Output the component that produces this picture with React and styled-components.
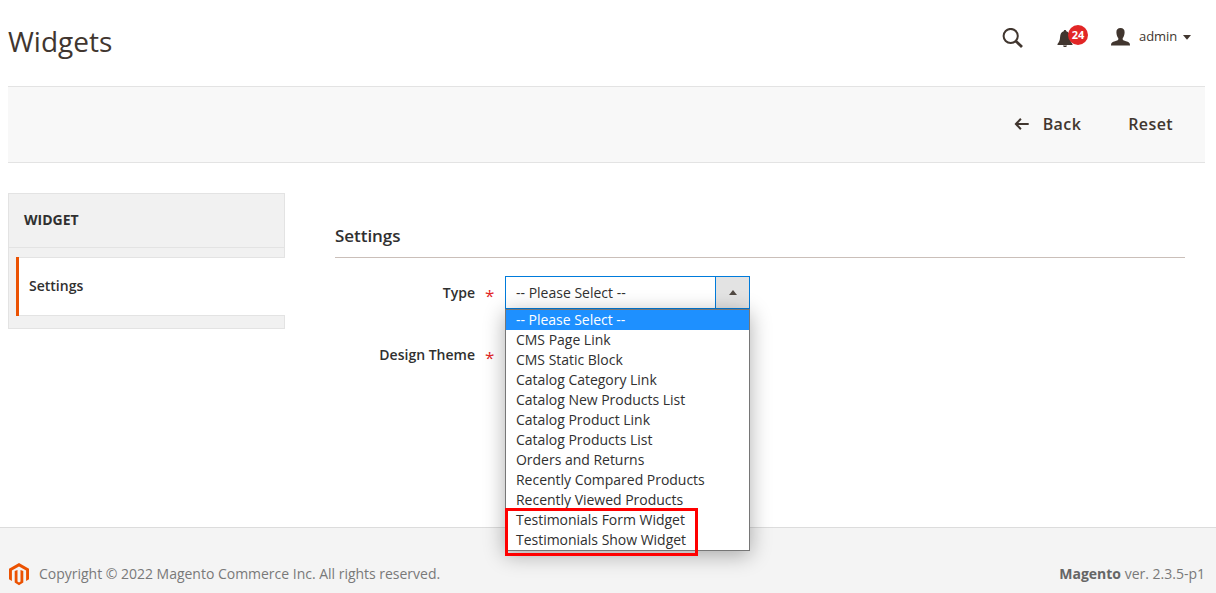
import React from 'react';
import styled, { createGlobalStyle } from 'styled-components';

const GlobalStyle = createGlobalStyle`
  * { box-sizing: border-box; }
  body {
    margin: 0;
    background: #fff;
    color: #303030;
    font: 400 14px/20px 'Open Sans', 'Noto Sans', sans-serif;
    overflow: hidden;
  }
`;

const Page = styled.div`
  display: flex;
  flex-direction: column;
  height: 593px;
  overflow: hidden;
`;

const Header = styled.header`
  display: flex;
  justify-content: space-between;
  height: 86px;
  padding: 0 25px 0 8px;
  flex: none;
`;

const PageTitle = styled.h1`
  margin: 21px 0 0;
  font-size: 28px;
  line-height: 40px;
  font-weight: 400;
  color: #41362f;
`;

const HeaderTools = styled.div`
  display: flex;
  align-items: flex-start;
  color: #41362f;
  svg { display: block; flex: none; }
`;

const SearchButton = styled.div`
  margin: 28px 33px 0 0;
`;

const Notifications = styled.div`
  position: relative;
  width: 32px;
  height: 24px;
  margin: 25px 22px 0 0;
  svg { margin-top: 5px; }
`;

const Badge = styled.span`
  position: absolute;
  top: 0;
  left: 11px;
  width: 20px;
  height: 20px;
  border-radius: 50%;
  background: #e22626;
  color: #fff;
  font-size: 11px;
  font-weight: 700;
  line-height: 20px;
  text-align: center;
`;

const Account = styled.div`
  display: flex;
  align-items: center;
  margin-top: 27px;
  height: 20px;
  font-size: 13px;
`;

const AccountName = styled.span`
  margin: -2px 6px 0 9px;
  letter-spacing: -0.1px;
`;

const ActionBar = styled.div`
  display: flex;
  justify-content: flex-end;
  align-items: center;
  flex: none;
  height: 77px;
  margin: 0 11px 0 8px;
  padding-right: 32px;
  background: #f8f8f8;
  border-top: 1px solid #e3e3e3;
  border-bottom: 1px solid #e3e3e3;
`;

const ActionButton = styled.button`
  display: flex;
  align-items: center;
  gap: 14px;
  margin: 0 0 2px 47px;
  padding: 0;
  border: 0;
  background: none;
  color: #41362f;
  font: 600 16px/22px 'Open Sans', sans-serif;
  letter-spacing: 0.4px;
`;

const Body = styled.main`
  display: flex;
  align-items: flex-start;
  flex: none;
  height: 364px;
  padding: 30px 31px 0 8px;
`;

const Sidebar = styled.nav`
  width: 277px;
  height: 136px;
  flex: none;
  background: #f1f1f1;
  border: 1px solid #e3e3e3;
`;

const SidebarTitle = styled.div`
  height: 54px;
  padding: 16px 15px;
  border-bottom: 1px solid #e3e3e3;
  font-weight: 700;
`;

const SidebarItem = styled.div`
  height: 59px;
  margin: 9px -1px 0 7px;
  padding: 19px 0 0 10px;
  background:
    linear-gradient(#e3e3e3, #e3e3e3) top / 100% 1px no-repeat,
    linear-gradient(#e3e3e3, #e3e3e3) bottom / 100% 1px no-repeat,
    #fff;
  border-left: 3px solid #eb5202;
  font-weight: 600;
`;

const Content = styled.section`
  flex: 1;
  margin-left: 50px;
`;

const SectionTitle = styled.h2`
  height: 65px;
  margin: 0 0 18px;
  padding-top: 32px;
  border-bottom: 1px solid #cabfb9;
  font-size: 17px;
  line-height: 22px;
  font-weight: 600;
  letter-spacing: -0.05px;
`;

const Field = styled.div`
  display: flex;
  height: 33px;
  margin-bottom: 29px;
`;

const Label = styled.label`
  display: flex;
  justify-content: flex-end;
  gap: 10px;
  width: 158px;
  margin-right: 12px;
  padding-top: 7px;
  font-weight: 600;
`;

const Required = styled.span`
  width: 8px;
  padding-top: 3px;
  color: #e22626;
  font-size: 17px;
  font-weight: 400;
`;

const SelectWrap = styled.div`
  position: relative;
  width: 245px;
`;

const SelectBox = styled.div`
  display: flex;
  height: 33px;
  border: 1px solid #007bdb;
  background: #fff;
`;

const SelectValue = styled.span`
  flex: 1;
  padding: 6px 10px;
`;

const SelectArrow = styled.span`
  display: flex;
  align-items: center;
  justify-content: center;
  width: 34px;
  border-left: 1px solid #007bdb;
  background: #e3e3e3;
`;

const Options = styled.ul`
  position: absolute;
  top: 33px;
  left: 0;
  width: 245px;
  margin: 0;
  padding: 0;
  list-style: none;
  border: 1px solid #767676;
  background: #fff;
  box-shadow: 0 4px 20px rgba(0, 0, 0, 0.32);
`;

const Option = styled.li`
  height: 20px;
  padding-left: 10px;
  line-height: 20px;
  letter-spacing: -0.02px;
  white-space: nowrap;
  color: ${(p) => (p.$selected ? '#fff' : '#303030')};
  background: ${(p) => (p.$selected ? '#1e90ff' : 'transparent')};
`;

const Highlight = styled.div`
  position: absolute;
  top: 232px;
  left: 0;
  width: 193px;
  height: 48px;
  border: 3px solid #f00;
`;

const Footer = styled.footer`
  display: flex;
  justify-content: space-between;
  flex: 1;
  padding: 36px 11px 0 8px;
  background: #f4f4f4;
  border-top: 1px solid #dcdcdc;
  color: #797979;
`;

const Copyright = styled.div`
  display: flex;
  gap: 9px;
  letter-spacing: -0.015px;
  svg { display: block; margin-top: -2px; }
`;

const Version = styled.div`
  strong { color: #666; font-weight: 700; }
`;

const options = [
  '-- Please Select --',
  'CMS Page Link',
  'CMS Static Block',
  'Catalog Category Link',
  'Catalog New Products List',
  'Catalog Product Link',
  'Catalog Products List',
  'Orders and Returns',
  'Recently Compared Products',
  'Recently Viewed Products',
  'Testimonials Form Widget',
  'Testimonials Show Widget',
];

const SearchIcon = () => (
  <svg width="22" height="21" viewBox="0 0 22 21" fill="none" stroke="currentColor">
    <circle cx="8.7" cy="8" r="7.1" strokeWidth="2" />
    <path d="M13.7 13 L20 19" strokeWidth="2.8" />
  </svg>
);

const BellIcon = () => (
  <svg width="16" height="18" viewBox="0 0 16 18" fill="currentColor">
    <path d="M8 0c.8 0 1.2.5 1.3 1.2C11.800 2 12.700 4 12.900 7c.2 3.400.9 4.800 2.600 7v1H.5v-1c1.700-2.200 2.400-3.600 2.600-7C3.300 4 4.200 2 6.700 1.200 6.800.5 7.200 0 8 0z" />
    <path d="M6 15.500h4c-.2 1-.9 1.500-2 1.500s-1.800-.5-2-1.500z" />
  </svg>
);

const UserIcon = () => (
  <svg width="19" height="18" viewBox="0 0 19 18" fill="currentColor">
    <path d="M9.500 0c2.700 0 4.300 1.700 4.100 4.500-.1 2.600-.9 4.500-1.900 5.600v1.500c.3.900 1.500 1.200 3.300 1.700 2.500.7 4 1.200 4 3.700v.5H0V17c0-2.500 1.500-3 4-3.700 1.800-.5 3-.8 3.300-1.700v-1.500c-1-1.100-1.800-3-1.900-5.600C5.200 1.700 6.800 0 9.500 0z" />
  </svg>
);

const BackIcon = () => (
  <svg width="15" height="12" viewBox="0 0 15 12" fill="none" stroke="currentColor" strokeWidth="2">
    <path d="M6.900.8 1.900 6l5 5.200M1.900 6H14.700" />
  </svg>
);

const MagentoLogo = () => (
  <svg width="22" height="24" viewBox="0 0 22 24" fill="#eb5202">
    <path d="M11 1 21 6.800V17.300l-2.900 1.700V8.500L11 4.400 3.900 8.500V19L1 17.300V6.800z" />
    <path d="M6.700 9.100 9.500 7.900V19.500l1.500.9 1.500-.9V7.900l2.800 1.200V20.400L11 23.200l-4.300-2.800z" />
  </svg>
);

const Triangle = ({ up }) => (
  <svg width="8" height="5" viewBox="0 0 8 5" fill={up ? '#514943' : 'currentColor'}>
    <path d={up ? 'M0 5 4 0 8 5z' : 'M0 0H8L4 4.800z'} />
  </svg>
);

export default function App() {
  return (
    <Page>
      <GlobalStyle />
      <Header>
        <PageTitle>Widgets</PageTitle>
        <HeaderTools>
          <SearchButton><SearchIcon /></SearchButton>
          <Notifications><BellIcon /><Badge>24</Badge></Notifications>
          <Account>
            <UserIcon />
            <AccountName>admin</AccountName>
            <Triangle />
          </Account>
        </HeaderTools>
      </Header>
      <ActionBar>
        <ActionButton><BackIcon />Back</ActionButton>
        <ActionButton>Reset</ActionButton>
      </ActionBar>
      <Body>
        <Sidebar>
          <SidebarTitle>WIDGET</SidebarTitle>
          <SidebarItem>Settings</SidebarItem>
        </Sidebar>
        <Content>
          <SectionTitle>Settings</SectionTitle>
          <Field>
            <Label>Type<Required>*</Required></Label>
            <SelectWrap>
              <SelectBox>
                <SelectValue>-- Please Select --</SelectValue>
                <SelectArrow><Triangle up /></SelectArrow>
              </SelectBox>
              <Options>
                {options.map((o, i) => (
                  <Option key={o} $selected={i === 0}>{o}</Option>
                ))}
              </Options>
              <Highlight />
            </SelectWrap>
          </Field>
          <Field>
            <Label>Design Theme<Required>*</Required></Label>
          </Field>
        </Content>
      </Body>
      <Footer>
        <Copyright>
          <MagentoLogo />
          <span>Copyright © 2022 Magento Commerce Inc. All rights reserved.</span>
        </Copyright>
        <Version><strong>Magento</strong> ver. 2.3.5-p1</Version>
      </Footer>
    </Page>
  );
}
